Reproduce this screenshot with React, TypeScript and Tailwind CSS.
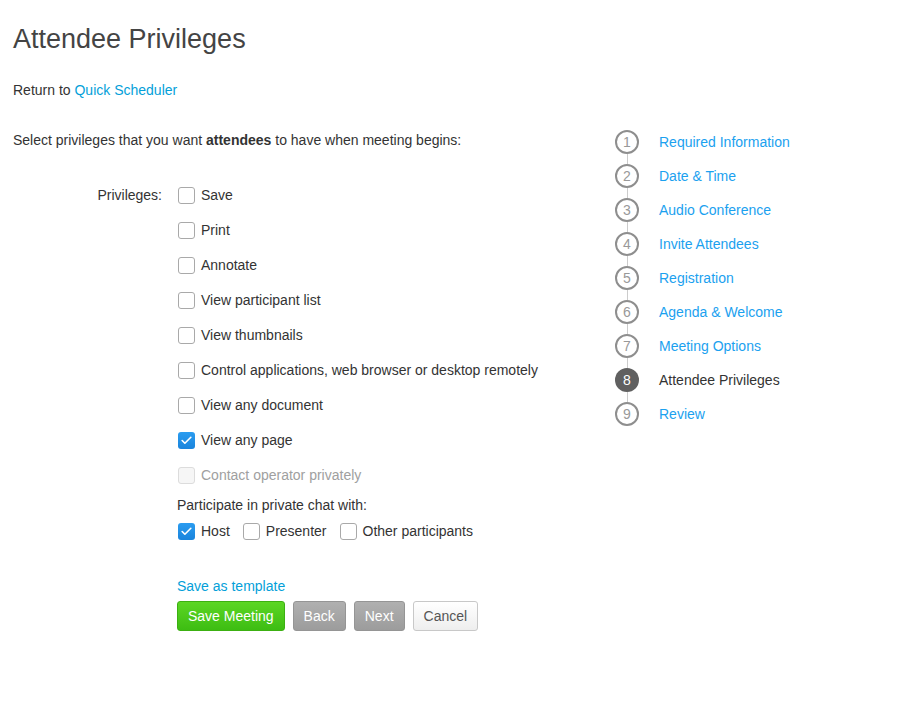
import { Check } from "lucide-react";

type Priv = { label: string; checked?: boolean; disabled?: boolean };

const privileges: Priv[] = [
  { label: "Save" },
  { label: "Print" },
  { label: "Annotate" },
  { label: "View participant list" },
  { label: "View thumbnails" },
  { label: "Control applications, web browser or desktop remotely" },
  { label: "View any document" },
  { label: "View any page", checked: true },
  { label: "Contact operator privately", disabled: true },
];

const steps = [
  "Required Information",
  "Date & Time",
  "Audio Conference",
  "Invite Attendees",
  "Registration",
  "Agenda & Welcome",
  "Meeting Options",
  "Attendee Privileges",
  "Review",
];
const current = 8;

const Box = ({ checked, disabled }: { checked?: boolean; disabled?: boolean }) => {
  if (checked) {
    return (
      <span className="flex h-[17px] w-[17px] shrink-0 items-center justify-center rounded-[3px] bg-gradient-to-b from-[#2a9cf0] to-[#1a84dc] text-white">
        <Check size={13} strokeWidth={3} />
      </span>
    );
  }
  return (
    <span
      className={`h-[17px] w-[17px] shrink-0 rounded-[3px] border ${
        disabled ? "border-[#dcdcdc] bg-[#f6f6f6]" : "border-[#a9a9a9] bg-white"
      }`}
    />
  );
};

const App = () => {
  return (
    <div className="min-h-screen bg-white pl-[13px] font-['Liberation_Sans',Arial,sans-serif] text-[14px] text-[#333]">
      {/* Header */}
      <h1 className="pt-[22px] text-[27px] leading-[34px] font-normal text-[#444]">Attendee Privileges</h1>

      <p className="mt-[24px] leading-5">
        Return to <a className="text-[#049fd9]">Quick Scheduler</a>
      </p>

      <div className="mt-[30px] flex">
        {/* Left form */}
        <div className="w-[602px]">
          <p className="leading-5">
            Select privileges that you want <b>attendees</b> to have when meeting begins:
          </p>

          <div className="mt-[28px] flex">
            <div className="w-[165px] pr-[16px] text-right leading-[35px]">Privileges:</div>
            <div>
              {privileges.map((p) => (
                <div key={p.label} className="flex h-[35px] items-center">
                  <Box checked={p.checked} disabled={p.disabled} />
                  <span className={`ml-[6px] ${p.disabled ? "text-[#a0a0a0]" : ""}`}>{p.label}</span>
                </div>
              ))}

              <p className="mt-[2px] -ml-px leading-5">Participate in private chat with:</p>
              <div className="mt-[6px] flex h-[20px] items-center gap-[13px]">
                <label className="flex items-center">
                  <Box checked />
                  <span className="ml-[6px]">Host</span>
                </label>
                <label className="flex items-center">
                  <Box />
                  <span className="ml-[6px]">Presenter</span>
                </label>
                <label className="flex items-center">
                  <Box />
                  <span className="ml-[6px]">Other participants</span>
                </label>
              </div>

              <a className="mt-[35px] -ml-px block leading-5 text-[#049fd9]">Save as template</a>

              <div className="mt-[5px] -ml-px flex gap-2">
                <button className="h-[30px] rounded-[3px] border border-[#3cb012] bg-gradient-to-b from-[#5bd624] to-[#3dbd12] px-[10px] text-white">
                  Save Meeting
                </button>
                <button className="h-[30px] rounded-[3px] border border-[#959595] bg-gradient-to-b from-[#b0b0b0] to-[#9c9c9c] px-[10px] text-white">
                  Back
                </button>
                <button className="h-[30px] rounded-[3px] border border-[#959595] bg-gradient-to-b from-[#b0b0b0] to-[#9c9c9c] px-[10px] text-white">
                  Next
                </button>
                <button className="h-[30px] rounded-[3px] border border-[#c8c8c8] bg-gradient-to-b from-white to-[#eeeeee] px-[10px] text-[#555]">
                  Cancel
                </button>
              </div>
            </div>
          </div>
        </div>

        {/* Steps */}
        <ol>
          {steps.map((s, i) => {
            const n = i + 1;
            const active = n === current;
            return (
              <li key={s} className="flex items-start">
                <div className="flex w-6 flex-col items-center">
                  <span
                    className={`flex h-6 w-6 items-center justify-center rounded-full text-[14px] ${
                      active ? "bg-[#606060] text-white" : "border-2 border-[#8e8e8e] text-[#999]"
                    }`}
                  >
                    {n}
                  </span>
                  {n < steps.length && <span className="h-[10px] w-px bg-[#cccccc]" />}
                </div>
                <span className={`ml-5 leading-6 ${active ? "text-[#333]" : "text-[#1ba1ef]"}`}>{s}</span>
              </li>
            );
          })}
        </ol>
      </div>
    </div>
  );
};

export default App;
